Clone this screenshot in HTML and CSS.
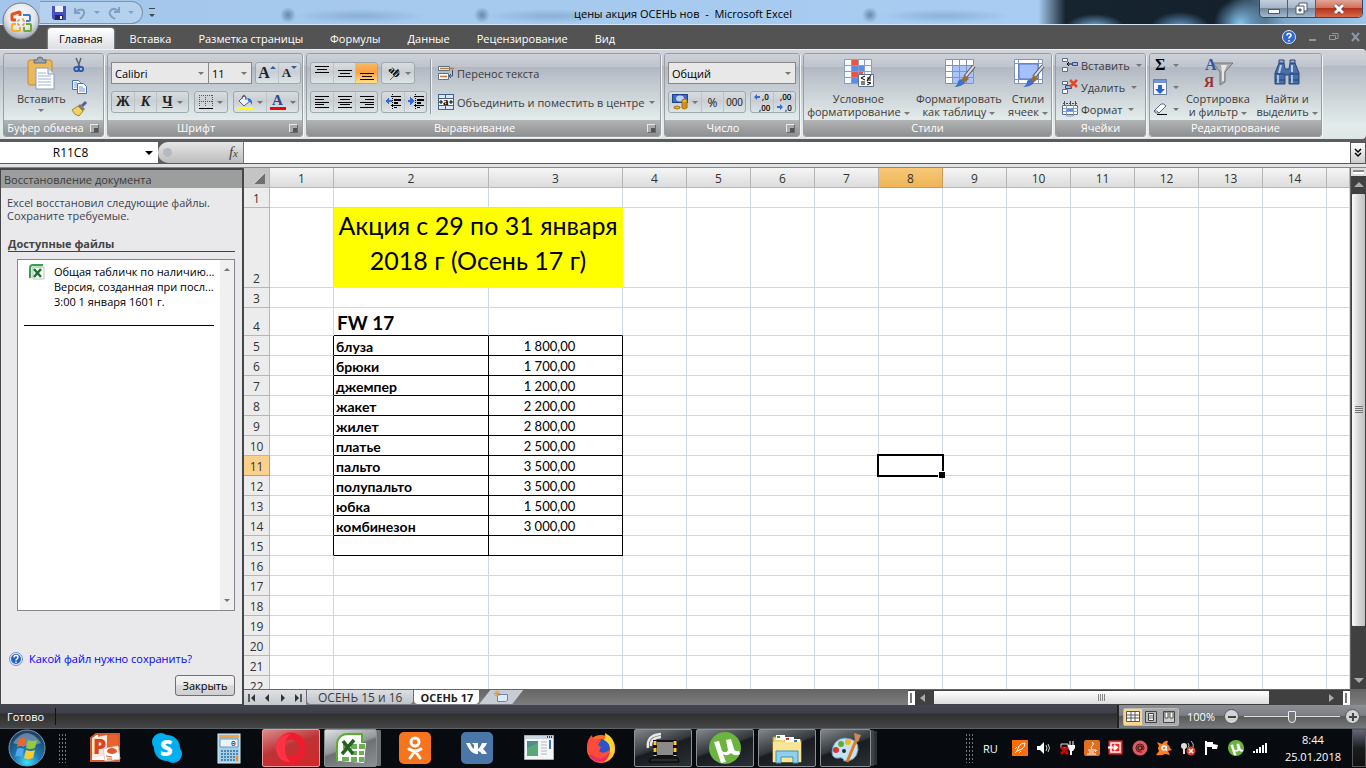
FILE: index.html
```
<!DOCTYPE html>
<html lang="ru">
  <head>
    <meta charset="UTF-8" />
    <meta name="viewport" content="width=device-width, initial-scale=1.0" />
    <title>цены акция ОСЕНЬ нов - Microsoft Excel</title>
    <link rel="stylesheet" href="styles.css">
  </head>
  <body>
    <!-- Window title -->
    <header class="titlebar">
      <button class="orb" aria-label="Office">
        <svg width="38" height="38" viewBox="0 0 38 38">
          <defs>
            <radialGradient id="orbFill" cx="50%" cy="35%" r="65%">
              <stop offset="0" stop-color="#ffffff" />
              <stop offset="0.6" stop-color="#e2e5ea" />
              <stop offset="1" stop-color="#9ba1ac" />
            </radialGradient>
          </defs>
          <circle cx="19" cy="19" r="18" fill="url(#orbFill)" stroke="#6f7682" />
          <g fill="none">
            <path d="M10 17v-4q0-1 1-1l6-2q1 0 1 1v3M10 17q0 1 1 1h3" stroke="#e8501d" stroke-width="3" />
            <path d="M21 13h6q1 0 1 1v4q0 1-1 1h-3" stroke="#3b7fd0" stroke-width="2" />
            <path d="M14 22h-3q-1 0-1 1v5q0 1 1 1h6q1 0 1-1v-3" stroke="#f5b21a" stroke-width="2" />
            <path d="M24 22h4q1 0 1 1v5q0 1-1 1h-5q-1 0-1-1v-3" stroke="#6cab2f" stroke-width="2" />
            <path d="M17 17v2h-2M21 16v3h2M15 22h2v2M23 22h-2v2" stroke="#d97a28" />
          </g>
        </svg>
      </button>
      <div class="quick">
        <button aria-label="Сохранить">
          <svg width="14" height="14" viewBox="0 0 14 14"><path d="M0 0h14v14H2l-2-2z" fill="#4a4fc0" /><path d="M3 0h8v6H3z" fill="#e9efff" /><path d="M3 9h8v5H3z" fill="#23256f" /><path d="M8 10h2v3H8z" fill="#fff" /></svg>
        </button>
        <button aria-label="Отменить">
          <svg width="14" height="14" viewBox="0 0 14 14"><path d="M2 2v5h5M2 7q4-5 8-3 3 3-1 7l-2 2" fill="none" stroke="#7f9fc4" stroke-width="2" /></svg>
        </button>
        <i class="arrow pale"></i>
        <button aria-label="Повторить">
          <svg width="14" height="14" viewBox="0 0 14 14"><path d="M12 1v5H7M12 6Q8 1 4 4q-3 4 1 7l3 2" fill="none" stroke="#7f9fc4" stroke-width="2" /></svg>
        </button>
        <i class="arrow pale"></i>
      </div>
      <button class="quick-more" aria-label="Настройка панели"><i class="arrow dark"></i></button>
      <h1>цены акция ОСЕНЬ нов&nbsp; - &nbsp;Microsoft Excel</h1>
      <div class="window-buttons">
        <button aria-label="Свернуть"><svg width="12" height="12" viewBox="0 0 12 12"><rect x="0.5" y="6.500" width="11" height="4" fill="#fff" stroke="#4c5a6e" /></svg></button>
        <button aria-label="Восстановить"><svg width="13" height="13" viewBox="0 0 13 13"><path d="M4 1h8v8H4z" fill="#fff" stroke="#4c5a6e" /><path d="M1 4h8v8H1z" fill="#fff" stroke="#4c5a6e" /><path d="M4 7h2v2H4z" fill="#7890ab" stroke="#4c5a6e" /></svg></button>
        <button class="close" aria-label="Закрыть окно"><svg width="12" height="12" viewBox="0 0 12 12"><path d="M2 2l8 8M10 2l-8 8" stroke="#5d3434" stroke-width="4" /><path d="M2 2l8 8M10 2l-8 8" stroke="#fff" stroke-width="3" /></svg></button>
      </div>
    </header>

    <!-- Ribbon tabs -->
    <nav class="tabs">
      <button class="active">Главная</button>
      <button>Вставка</button>
      <button>Разметка страницы</button>
      <button>Формулы</button>
      <button>Данные</button>
      <button>Рецензирование</button>
      <button>Вид</button>
      <div class="book-buttons">
        <button aria-label="Справка"><svg width="14" height="14" viewBox="0 0 14 14"><circle cx="7" cy="7" r="6.500" fill="#2f66d8" stroke="#dce8fb" /><path d="M5 5.500q0-2 2-2t2 1.700q0 1-1 1.600-1 .6-1 1.600M7 10v1.500" fill="none" stroke="#fff" stroke-width="1.600" /></svg></button>
        <button aria-label="Свернуть книгу"><svg width="9" height="10" viewBox="0 0 9 10"><path d="M1 8h7" stroke="#8d97a5" stroke-width="2" /></svg></button>
        <button aria-label="Восстановить книгу"><svg width="10" height="10" viewBox="0 0 10 10"><path d="M.5 3.500h6v4h-6zM3 1.500h6v5H7" fill="none" stroke="#8d97a5" /></svg></button>
        <button aria-label="Закрыть книгу"><svg width="9" height="10" viewBox="0 0 9 10"><path d="M1 1l7 8M8 1L1 9" stroke="#8d97a5" stroke-width="2" /></svg></button>
      </div>
    </nav>

    <!-- Ribbon -->
    <div class="ribbon">
      <section class="group clipboard">
        <div class="group-body">
          <button class="big">
            <svg width="32" height="32" viewBox="0 0 32 32"><rect x="3" y="3" width="24" height="25" rx="2" fill="#eab95c" stroke="#c18a33" /><path d="M9 5V3h3q0-3 3-3t3 3h3v3H9z" fill="#9da3ab" stroke="#666c74" /><path d="M11 11h12l6 6v15H11z" fill="#fff" stroke="#8b9cb8" /><path d="M23 11v6h6" fill="#dfe7f3" stroke="#8b9cb8" /><path d="M13 16h8M13 19h13M13 22h13M13 25h13M13 28h13" stroke="#9fb2d4" /></svg>
            <span>Вставить</span>
            <i class="arrow"></i>
          </button>
          <div class="stack">
            <button aria-label="Вырезать"><svg width="16" height="16" viewBox="0 0 16 16"><path d="M5 1l4 9M10 1L7 10" stroke="#5a6478" stroke-width="1.500" /><circle cx="5.500" cy="12" r="2.200" fill="none" stroke="#2a56b4" stroke-width="1.800" /><circle cx="10" cy="12" r="2.200" fill="none" stroke="#2a56b4" stroke-width="1.800" /></svg></button>
            <button aria-label="Копировать"><svg width="16" height="16" viewBox="0 0 16 16"><path d="M1.500 1.500h6l2 2v7h-8z" fill="#fff" stroke="#4b6fb4" /><path d="M6.500 4.500h6l3 3v7h-9z" fill="#fff" stroke="#4b6fb4" /><path d="M3 4h3M3 6h3M3 8h3M8 8h4M8 10h6M8 12h6" stroke="#6f94d6" /></svg></button>
            <button aria-label="Формат по образцу"><svg width="16" height="16" viewBox="0 0 16 16"><path d="M1 9l6-4 5 5-4 5q-5-1-7-6z" fill="#f0d268" stroke="#a88728" /><path d="M7 5l2-2 5 5-2 2z" fill="#8b7b56" /><path d="M11 5l4-4" stroke="#4f5fae" stroke-width="3" /></svg></button>
          </div>
        </div>
        <footer>Буфер обмена <button class="launcher" aria-label="Открыть буфер обмена"></button></footer>
      </section>

      <section class="group font">
        <div class="group-body rows">
          <div class="row">
            <div class="combos">
              <label class="combo family"><select aria-label="Шрифт"><option>Calibri</option></select></label>
              <label class="combo size"><select aria-label="Размер шрифта"><option>11</option></select></label>
            </div>
            <div class="buttons">
              <button class="serif grow" aria-label="Увеличить размер шрифта">A<i class="up"></i></button>
              <button class="serif shrink" aria-label="Уменьшить размер шрифта">A<i class="down"></i></button>
            </div>
          </div>
          <div class="row">
            <div class="buttons">
              <button class="serif">Ж</button>
              <button class="serif italic">К</button>
              <button class="serif wide"><u>Ч</u><i class="arrow"></i></button>
            </div>
            <div class="buttons">
              <button class="wide" aria-label="Границы"><svg width="14" height="14" viewBox="0 0 14 14" shape-rendering="crispEdges"><path d="M.5 0v12M6.500 0v12M13.500 0v12M0 .5h14M0 6.500h14" stroke="#555" stroke-dasharray="1 1" /><path d="M0 13h14" stroke="#000" stroke-width="1" /></svg><i class="arrow"></i></button>
            </div>
            <div class="buttons">
              <button class="wide" aria-label="Цвет заливки"><svg width="16" height="16" viewBox="0 0 16 16"><path d="M2 7l5-5 6 5-6 5z" fill="#eef2f8" stroke="#53607a" /><path d="M5 5q0-4 2-4t2 5" fill="none" stroke="#53607a" /><path d="M11 4q5 1 4 7-1-3-4-4z" fill="#2f6fd0" /><path d="M0 13h16v3H0z" fill="#ff0" /></svg><i class="arrow"></i></button>
              <button class="wide color" aria-label="Цвет текста"><b>A</b><i class="arrow"></i></button>
            </div>
          </div>
        </div>
        <footer>Шрифт <button class="launcher" aria-label="Открыть шрифт"></button></footer>
      </section>

      <section class="group align">
        <div class="group-body">
          <div class="rows">
            <div class="row">
              <div class="buttons">
                <button aria-label="По верхнему краю"><svg width="14" height="16" viewBox="0 0 14 16" shape-rendering="crispEdges"><path d="M0 1.500h14M2 4.500h10M0 7.500h14" stroke="#000" /></svg></button>
                <button aria-label="По середине"><svg width="14" height="16" viewBox="0 0 14 16" shape-rendering="crispEdges"><path d="M0 5.500h14M2 8.500h10M0 11.500h14" stroke="#000" /></svg></button>
                <button class="pressed" aria-label="По нижнему краю"><svg width="14" height="16" viewBox="0 0 14 16" shape-rendering="crispEdges"><path d="M0 8.500h14M2 11.500h10M0 14.500h14" stroke="#000" /></svg></button>
              </div>
              <div class="buttons">
                <button class="wide" aria-label="Ориентация"><svg width="16" height="16" viewBox="0 0 16 16"><path d="M5 15L14 6M14 6v4M14 6h-4" fill="none" stroke="#666" /><text x="1" y="6" transform="rotate(45 3 8)" font-family="Liberation Serif" font-size="11" font-weight="bold">ab</text></svg><i class="arrow"></i></button>
              </div>
            </div>
            <div class="row">
              <div class="buttons">
                <button aria-label="По левому краю"><svg width="14" height="16" viewBox="0 0 14 16" shape-rendering="crispEdges"><path d="M0 2.500h14M0 5.500h9M0 8.500h14M0 10.500h9M0 13.500h14" stroke="#000" /></svg></button>
                <button aria-label="По центру"><svg width="14" height="16" viewBox="0 0 14 16" shape-rendering="crispEdges"><path d="M0 2.500h14M2 5.500h10M0 8.500h14M2 10.500h10M0 13.500h14" stroke="#000" /></svg></button>
                <button aria-label="По правому краю"><svg width="14" height="16" viewBox="0 0 14 16" shape-rendering="crispEdges"><path d="M0 2.500h14M5 5.500h9M0 8.500h14M5 10.500h9M0 13.500h14" stroke="#000" /></svg></button>
              </div>
              <div class="buttons">
                <button aria-label="Уменьшить отступ"><svg width="16" height="16" viewBox="0 0 16 16" shape-rendering="crispEdges"><path d="M7.500 0v16" stroke="#000" stroke-dasharray="1 1" /><path d="M6 2.500h10M6 11.500h10M9 13.500h3" stroke="#000" /><path d="M9 5h7v2H9zM9 8h4v2H9z" /><path d="M0 7l4-4v3h3v2H4v3z" fill="#2c6be0" /></svg></button>
                <button aria-label="Увеличить отступ"><svg width="16" height="16" viewBox="0 0 16 16" shape-rendering="crispEdges"><path d="M7.500 0v16" stroke="#000" stroke-dasharray="1 1" /><path d="M6 2.500h10M6 11.500h10M9 13.500h3" stroke="#000" /><path d="M9 5h7v2H9zM9 8h4v2H9z" /><path d="M6 7L2 3v3H0v2h2v3z" fill="#2c6be0" /></svg></button>
              </div>
            </div>
          </div>
          <div class="divider"></div>
          <div class="rows">
            <button class="line"><svg width="16" height="16" viewBox="0 0 16 16"><path d="M.5 1.500h11v4H.5zM.5 8.500h10v6H.5z" fill="#fff" stroke="#5f7089" /><path d="M2 3.500h14M2 11.500h7" stroke="#b57b3f" stroke-width="1.500" /><path d="M14.500 5v6h-3M13 9l-2 2 2 2" fill="none" stroke="#3c4f74" /></svg>Перенос текста</button>
            <button class="line"><svg width="16" height="16" viewBox="0 0 16 16"><rect width="16" height="16" fill="#44608f" /><path d="M1 1h6v3H1zM8 1h7v3H8zM1 12h6v3H1zM8 12h7v3H8z" fill="#dbe6f6" /><path d="M1 5h14v6H1z" fill="#fff" /><path d="M1 8h4M11 8h4M3 6v4M13 6v4" stroke="#000" /><text x="5" y="11" font-family="Liberation Serif" font-size="11" font-weight="bold">a</text></svg>Объединить и поместить в центре<i class="arrow"></i></button>
          </div>
        </div>
        <footer>Выравнивание <button class="launcher" aria-label="Открыть выравнивание"></button></footer>
      </section>

      <section class="group number">
        <div class="group-body rows">
          <label class="combo"><select aria-label="Числовой формат"><option>Общий</option></select></label>
          <div class="row">
            <div class="buttons">
              <button class="wide" aria-label="Денежный формат"><svg width="16" height="16" viewBox="0 0 16 16"><rect x="0.500" y="0.500" width="15" height="8" fill="#3b6cc4" stroke="#20458e" /><ellipse cx="8" cy="4.500" rx="4" ry="3" fill="#bcd2f3" /><path d="M10 6q3-2 5 0v8q-3 2-5 0zM2 13q3-2 6 0v1q-3 2-6 0z" fill="#f2b62c" stroke="#a7700c" /><path d="M10 9h5M10 11h5M10 13h5" stroke="#a7700c" /></svg><i class="arrow"></i></button>
              <button class="percent">%</button>
              <button class="thousands">000</button>
            </div>
            <div class="buttons">
              <button aria-label="Увеличить разрядность"><svg width="18" height="20" viewBox="0 0 18 20"><path d="M1 5l3-3v2h3v2H4v2z" fill="#2c6be0" /><text x="9" y="8" font-family="Open Sans" font-size="8" font-weight="600">,0</text><text x="6" y="19" font-family="Open Sans" font-size="8" font-weight="600">,00</text></svg></button>
              <button aria-label="Уменьшить разрядность"><svg width="18" height="20" viewBox="0 0 18 20"><path d="M7 15l-3-3v2H1v2h3v2z" fill="#2c6be0" /><text x="4" y="8" font-family="Open Sans" font-size="8" font-weight="600">,00</text><text x="9" y="19" font-family="Open Sans" font-size="8" font-weight="600">,0</text></svg></button>
            </div>
          </div>
        </div>
        <footer>Число <button class="launcher" aria-label="Открыть число"></button></footer>
      </section>

      <section class="group styles">
        <div class="group-body">
          <button class="big">
            <svg width="32" height="32" viewBox="0 0 32 32"><path d="M2.500 2.500h27v24h-27z" fill="#f4f8ff" /><path d="M9 2h7v6H9zM9 14h12v6H9z" fill="#f0533a" /><path d="M9 8h13v6H9zM9 20h7v6H9z" fill="#5b8de8" /><path d="M2.500 2.500h27v24h-27zM9.500 2v25M16.500 2v25M22.500 2v25M2 8.500h28M2 14.500h28M2 20.500h28" fill="none" stroke="#8a9dc0" /><path d="M16.500 17.500h15v12h-15z" fill="#fff" stroke="#5d7396" /><path d="M23 19l-4 2 4 2M19 25h4M19 27h4M25 21h4M25 23h4M29 18l-4 6M25 25l4 1-4 2" fill="none" stroke="#000" /></svg>
            <span>Условное<br>форматирование<i class="arrow"></i></span>
          </button>
          <button class="big">
            <svg width="32" height="32" viewBox="0 0 32 32"><path d="M2.500 2.500h28v24h-28z" fill="#fff" /><path d="M9 8h21v18H9z" fill="#a9c4fb" /><path d="M2.500 2.500h28v24h-28zM9.500 2v25M16.500 2v25M23.500 2v25M2 8.500h28M2 14.500h28M2 20.500h28" fill="none" stroke="#7f95bd" /><path d="M31 9l-9 11" stroke="#555" stroke-width="4" /><path d="M31 9l-9 11" stroke="#d8dadd" stroke-width="2" /><path d="M22 18l4 4-5 4-3-3z" fill="#9a6a3b" /><path d="M18 22l4 4q-4 4-11 4 4-2 4-6z" fill="#3f72c6" /></svg>
            <span>Форматировать<br>как таблицу<i class="arrow"></i></span>
          </button>
          <button class="big">
            <svg width="32" height="32" viewBox="0 0 32 32"><path d="M2.500 2.500h28v24h-28z" fill="#fff" stroke="#7f95bd" /><path d="M6.500 2v25M26.500 2v25M2 6.500h28M2 22.500h28" stroke="#7f95bd" /><path d="M7 7h19v15H7z" fill="#a5c0fa" stroke="#5279c4" /><path d="M31 9l-9 11" stroke="#555" stroke-width="4" /><path d="M31 9l-9 11" stroke="#d8dadd" stroke-width="2" /><path d="M22 18l4 4-5 4-3-3z" fill="#9a6a3b" /><path d="M18 22l4 4q-4 4-11 4 4-2 4-6z" fill="#3f72c6" /></svg>
            <span>Стили<br>ячеек<i class="arrow"></i></span>
          </button>
        </div>
        <footer>Стили</footer>
      </section>

      <section class="group cells">
        <div class="group-body stack">
          <button class="line"><svg width="16" height="16" viewBox="0 0 16 16"><path d="M.5 1.500h5v3h-5zM.5 10.500h5v4h-5z" fill="#fff" stroke="#5a6f96" /><path d="M10.500 5.500h5v3h-5z" fill="#9dbcf0" stroke="#2e4d86" /><path d="M10 7H5M7 5L5 7l2 2" stroke="#000" fill="none" /></svg>Вставить<i class="arrow"></i></button>
          <button class="line"><svg width="16" height="16" viewBox="0 0 16 16"><path d="M.5 2.500h5v3h-5zM.5 10.500h5v4h-5z" fill="#fff" stroke="#5a6f96" /><path d="M3.500 6.500h6v3h-6z" fill="#9dbcf0" stroke="#2e4d86" /><path d="M8 1l7 7M15 1L8 8" stroke="#ee4422" stroke-width="2.500" /></svg>Удалить<i class="arrow"></i></button>
          <button class="line"><svg width="16" height="16" viewBox="0 0 16 16"><path d="M.5 4.500h15v9H.5z" fill="#fff" stroke="#5a6f96" /><path d="M5 7h6v4H5z" fill="#5b8de8" /><path d="M4.500 4v11h7V4M1 7.500h15M1 10.500h15" fill="none" stroke="#8b9fc2" /><path d="M1 2.500h14M2.500 0v4M8.500 0v4M13.500 0v4" stroke="#3d4b66" stroke-dasharray="2 1" /></svg>Формат<i class="arrow"></i></button>
        </div>
        <footer>Ячейки</footer>
      </section>

      <section class="group editing">
        <div class="group-body">
          <div class="stack">
            <button class="sigma"><b>Σ</b><i class="arrow"></i></button>
            <button aria-label="Заполнить"><svg width="14" height="16" viewBox="0 0 14 16"><rect x="0.500" y="0.500" width="13" height="15" fill="#f3f7ff" stroke="#6b7f9f" /><path d="M1 1h12v3H1z" fill="#7196d8" /><path d="M5 6h4v4h3l-5 5-5-5h3z" fill="#2b63d0" /></svg><i class="arrow"></i></button>
            <button aria-label="Очистить"><svg width="14" height="16" viewBox="0 0 14 16"><path d="M1 10l7-7q3-1 5 2l-7 7q-4 1-5-2z" fill="#fff" stroke="#56678c" /><path d="M1 10q3-1 5 2" fill="none" stroke="#56678c" /><path d="M4 13.500h10" stroke="#000" /></svg><i class="arrow"></i></button>
          </div>
          <button class="big">
            <svg width="32" height="32" viewBox="0 0 32 32"><path d="M11 6h20l-8 9v10l-5 3V15z" fill="#a9abad" stroke="#75787b" /><path d="M19 8h6l-3 7v9h-2v-9z" fill="#e6e7e8" /><text x="3" y="13" font-family="Liberation Serif" font-size="16" font-weight="bold" fill="#2c55b0">А</text><text x="2" y="30" font-family="Liberation Serif" font-size="14" font-weight="bold" fill="#9c2f2f">Я</text></svg>
            <span>Сортировка<br>и фильтр<i class="arrow"></i></span>
          </button>
          <button class="big">
            <svg width="32" height="32" viewBox="0 0 32 32"><path d="M8 6h5l1 6h4l1-6h5l4 10v11H18v-9h-4v9H4V16z" fill="#496ea9" stroke="#2a4677" /><path d="M8 3h5v3H8zM19 3h5v3h-5z" fill="#8fadd9" stroke="#2a4677" /><path d="M10 8L8 16M21 8v7" stroke="#b8cdec" stroke-width="2" /><path d="M4 17h10M18 17h10M4 23h10M18 23h10" stroke="#253f6e" /><path d="M7 18v8M21 18v8" stroke="#a7c0e6" stroke-width="2" /></svg>
            <span>Найти и<br>выделить<i class="arrow"></i></span>
          </button>
        </div>
        <footer>Редактирование</footer>
      </section>
    </div>

    <!-- Formula bar -->
    <div class="formula">
      <div class="name-box">
        <input type="text" value="R11C8" aria-label="Имя ячейки" />
        <i class="arrow black"></i>
      </div>
      <div class="fx"><span class="dot"></span><button aria-label="Вставить функцию"><i>f<small>x</small></i></button></div>
      <input class="formula-text" type="text" aria-label="Строка формул" />
      <button class="expand" aria-label="Развернуть"><svg width="8" height="10" viewBox="0 0 8 10"><path d="M1 1l3 3 3-3M1 5l3 3 3-3" fill="none" stroke="#000" stroke-width="1.500" /></svg></button>
    </div>

    <main>
      <aside class="recovery">
        <h2>Восстановление документа</h2>
        <p>Excel восстановил следующие файлы. Сохраните требуемые.</p>
        <h3>Доступные файлы</h3>
        <div class="files">
          <ul>
            <li>
              <svg width="16" height="16" viewBox="0 0 16 16"><path d="M4 3h11v12H4z" fill="#fff" stroke="#b9c4ba" /><path d="M1 14V4q0-3 3-3h10" fill="none" stroke="#37a04b" stroke-width="2" /><path d="M3 14V5q0-2 2-2h8" fill="none" stroke="#a6d8a9" /><path d="M5 5l7 8M12 5l-7 8" stroke="#1d7330" stroke-width="2.500" /></svg>
              <div>
                <span>Общая табличк по наличию...</span>
                <span>Версия, созданная при посл...</span>
                <span>3:00 1 января 1601 г.</span>
              </div>
            </li>
          </ul>
          <div class="files-scroll"><i class="up"></i><i class="down"></i></div>
        </div>
        <a class="help" href="#"><svg width="14" height="14" viewBox="0 0 14 14"><circle cx="7" cy="7" r="6.500" fill="#e3edfb" stroke="#6f94c8" /><circle cx="7" cy="7" r="5" fill="#2660c2" /><path d="M5 5.500q0-2 2-2t2 1.700q0 1-1 1.600-1 .6-1 1.600M7 9.500V11" fill="none" stroke="#fff" stroke-width="1.400" /></svg>Какой файл нужно сохранить?</a>
        <button class="close-pane">Закрыть</button>
      </aside>

      <section class="book">
        <div class="view">
          <div class="sheet">
            <table id="sheet">
              <colgroup>
                <col class="c-head"><col class="c-std"><col class="c-name"><col class="c-price">
                <col class="c-std"><col class="c-std"><col class="c-std"><col class="c-std"><col class="c-std"><col class="c-std">
                <col class="c-std"><col class="c-std"><col class="c-std"><col class="c-std"><col class="c-std"><col>
              </colgroup>
              <thead>
                <tr>
                  <th class="corner"></th><th>1</th><th>2</th><th>3</th><th>4</th><th>5</th><th>6</th><th>7</th>
                  <th class="current">8</th><th>9</th><th>10</th><th>11</th><th>12</th><th>13</th><th>14</th><th></th>
                </tr>
              </thead>
              <tbody>
                <tr><th>1</th><td></td><td></td><td></td></tr>
                <tr class="promo"><th>2</th><td></td><td colspan="2">Акция с 29 по 31 января 2018 г (Осень 17 г)</td></tr>
                <tr><th>3</th><td></td><td></td><td></td></tr>
                <tr class="season"><th>4</th><td></td><td>FW 17</td><td></td></tr>
                <tr class="price"><th>5</th><td></td><td>блуза</td><td>1 800,00</td></tr>
                <tr class="price"><th>6</th><td></td><td>брюки</td><td>1 700,00</td></tr>
                <tr class="price"><th>7</th><td></td><td>джемпер</td><td>1 200,00</td></tr>
                <tr class="price"><th>8</th><td></td><td>жакет</td><td>2 200,00</td></tr>
                <tr class="price"><th>9</th><td></td><td>жилет</td><td>2 800,00</td></tr>
                <tr class="price"><th>10</th><td></td><td>платье</td><td>2 500,00</td></tr>
                <tr class="price"><th class="current">11</th><td></td><td>пальто</td><td>3 500,00</td></tr>
                <tr class="price"><th>12</th><td></td><td>полупальто</td><td>3 500,00</td></tr>
                <tr class="price"><th>13</th><td></td><td>юбка</td><td>1 500,00</td></tr>
                <tr class="price"><th>14</th><td></td><td>комбинезон</td><td>3 000,00</td></tr>
                <tr class="price"><th>15</th><td></td><td></td><td></td></tr>
              </tbody>
            </table>
          </div>
          <div class="vscroll">
            <span class="split"></span>
            <i class="up"></i>
            <span class="thumb"></span>
            <i class="down"></i>
          </div>
        </div>
        <div class="sheet-bar">
          <div class="sheet-nav">
            <button aria-label="Первый лист"><svg width="8" height="8" viewBox="0 0 8 8"><path d="M1 0v8" stroke="#333" stroke-width="1.500" /><path d="M7 0v8L3 4z" fill="#333" /></svg></button>
            <button aria-label="Предыдущий лист"><svg width="8" height="8" viewBox="0 0 8 8"><path d="M6 0v8L2 4z" fill="#333" /></svg></button>
            <button aria-label="Следующий лист"><svg width="8" height="8" viewBox="0 0 8 8"><path d="M2 0v8l4-4z" fill="#333" /></svg></button>
            <button aria-label="Последний лист"><svg width="8" height="8" viewBox="0 0 8 8"><path d="M1 0v8l4-4z" fill="#333" /><path d="M7 0v8" stroke="#333" stroke-width="1.500" /></svg></button>
          </div>
          <button class="sheet-tab">ОСЕНЬ 15 и 16</button>
          <button class="sheet-tab active">ОСЕНЬ 17</button>
          <button class="sheet-new" aria-label="Вставить лист"><svg width="16" height="13" viewBox="0 0 16 13"><path d="M4.500 4.500h10v6l-2 1h-8z" fill="#dfe9fa" stroke="#6b83b4" /><path d="M4 0v7M.5 3.500h7M1.500 1l5 5M6.500 1l-5 5" stroke="#e79a2b" /></svg></button>
          <div class="hscroll">
            <span class="handle"></span>
            <i class="left"></i>
            <span class="thumb"></span>
            <i class="right"></i>
            <span class="handle"></span>
          </div>
        </div>
      </section>
    </main>

    <!-- Status bar -->
    <div class="status">
      <span class="ready">Готово</span>
      <div class="zoom">
        <div class="views">
          <button class="on" aria-label="Обычный"><svg width="14" height="12" viewBox="0 0 14 12"><path d="M.5.500h13v10H.5zM5 0v11M9 0v11M0 4h14M0 7h14" fill="#fff" stroke="#555" /></svg></button>
          <button aria-label="Разметка страницы"><svg width="12" height="12" viewBox="0 0 12 12"><path d="M.5.500h11v11H.5z" fill="#bbb" stroke="#444" /><path d="M3.500 2.500h5v7h-5z" fill="#fff" stroke="#444" /><path d="M4 5h4M4 7h4" stroke="#666" /></svg></button>
          <button aria-label="Страничный"><svg width="12" height="12" viewBox="0 0 12 12"><path d="M.5.500h11v11H.5z" fill="#ccc" stroke="#444" /><path d="M2 1h3v6H2zM7 1h3v6H7z" fill="#fff" stroke="#555" /></svg></button>
        </div>
        <span>100%</span>
        <button class="round" aria-label="Уменьшить"><svg width="8" height="8" viewBox="0 0 8 8"><path d="M0 4h8" stroke="#444" stroke-width="2" /></svg></button>
        <input type="range" min="10" max="190" value="100" aria-label="Масштаб" />
        <button class="round" aria-label="Увеличить"><svg width="8" height="8" viewBox="0 0 8 8"><path d="M0 4h8M4 0v8" stroke="#444" stroke-width="2" /></svg></button>
      </div>
    </div>

    <!-- Windows taskbar -->
    <footer class="taskbar">
      <button class="start" aria-label="Пуск">
        <svg width="38" height="38" viewBox="0 0 38 38">
          <defs>
            <radialGradient id="startFill" cx="50%" cy="90%" r="80%">
              <stop offset="0" stop-color="#3fe0ff" />
              <stop offset="0.450" stop-color="#1f78b4" />
              <stop offset="1" stop-color="#1c4266" />
            </radialGradient>
          </defs>
          <circle cx="19" cy="19" r="18" fill="url(#startFill)" stroke="#7d97ad" />
          <path d="M5 14Q19-6 33 14 19 20 5 14z" fill="#b7cde0" opacity="0.450" />
          <path d="M11 10q4-2 7 0l-2 8q-3-2-7 0z" fill="#f0642a" />
          <path d="M20 11q4 2 9 0l-2 8q-5 2-9 0z" fill="#94c83d" />
          <path d="M9 20q3-2 7 0l-2 8q-4-2-7 0z" fill="#4fa8ea" />
          <path d="M18 21q4 2 9 0l-2 8q-5 2-9 0z" fill="#fccb2f" />
        </svg>
      </button>
      <span class="grip"></span>
      <div class="apps">
        <button aria-label="PowerPoint"><svg width="32" height="32" viewBox="0 0 32 32"><path d="M7 2h23v27H2V6z" fill="#fff" stroke="#d9592b" stroke-width="2" /><path d="M9 3h20v13H9z" fill="#e8622e" /><path d="M3 6l15-3v20L3 26z" fill="#fbe6da" /><text x="4" y="22" font-family="Open Sans" font-size="21" font-weight="800" fill="#d9451b">P</text><path d="M14 17l15-3 2 13-15 2z" fill="#fff" stroke="#f0c4b2" /><ellipse cx="23" cy="19" rx="5" ry="3" fill="#dc5a30" /><path d="M17 24l6 1M18 27h5" stroke="#dc5a30" /></svg></button>
        <button aria-label="Skype"><svg width="32" height="32" viewBox="0 0 32 32"><circle cx="16" cy="16" r="13" fill="#00aff0" /><circle cx="10" cy="10" r="9" fill="#00aff0" /><circle cx="22" cy="22" r="9" fill="#00aff0" /><text x="9" y="24" font-family="Open Sans" font-size="22" font-weight="800" fill="#fff">S</text></svg></button>
        <button aria-label="Калькулятор"><svg width="32" height="32" viewBox="0 0 32 32"><rect x="5" y="2" width="22" height="29" fill="#a5cfea" stroke="#e0f0fa" /><path d="M6 3h20v3H6z" fill="#f2a241" /><path d="M7 7h18v8H7z" fill="#e9f3fa" stroke="#6c9abb" /><text x="18" y="14" font-family="Liberation Mono" font-size="8">0</text><path d="M8 19h17M8 22h17M8 25h17M8 28h17" stroke="#4f86b0" stroke-width="2" stroke-dasharray="2 1" /><path d="M23 24h2v5h-2z" fill="#ef8e2c" /></svg></button>
        <button class="opera" aria-label="Opera"><svg width="32" height="32" viewBox="0 0 32 32"><ellipse cx="16" cy="16" rx="11.500" ry="12" fill="none" stroke="#ed1c2e" stroke-width="7" /><path d="M16 2q-6 3-6 14t6 14q-14 0-15-14Q2 2 16 2z" fill="#ff3345" /></svg></button>
        <button class="running current" aria-label="Excel"><svg width="32" height="32" viewBox="0 0 32 32"><path d="M2 30V11Q4 2 13 2h14v16" fill="#fff" stroke="#58ae2e" stroke-width="2" /><path d="M7 11h24l-2 20-24-2z" fill="#fff" /><path d="M8 12h6v5H8zM16 12h6v5h-6zM24 12h6v5h-6zM16 19h6v4h-6zM24 19h5v4h-5zM7 25h7v4H7zM16 25h6v5h-6zM24 25h5v5h-5z" fill="#6fae54" /><path d="M8 9l10 13M19 8L7 22" stroke="#23641f" stroke-width="3.500" /></svg></button>
        <button aria-label="Одноклассники"><svg width="32" height="32" viewBox="0 0 32 32"><rect width="32" height="32" rx="5" fill="#f7731c" /><circle cx="16" cy="10" r="4" fill="none" stroke="#fff" stroke-width="3" /><path d="M10 17q6 4 12 0M16 19l-5 7M16 19l5 7" fill="none" stroke="#fff" stroke-width="3" stroke-linecap="round" /></svg></button>
        <button aria-label="ВКонтакте"><svg width="32" height="32" viewBox="0 0 32 32"><rect width="32" height="32" rx="5" fill="#4a76a8" /><path d="M5 11h4q2 5 4 6v-4l-2-2h6v6q2-1 4-6h5q-1 3-4 6 3 2 4 5h-5q-2-3-4-3v3h-2Q9 21 5 11z" fill="#fff" /></svg></button>
        <button aria-label="Окно"><svg width="32" height="32" viewBox="0 0 32 32"><path d="M1.500 3.500h29v24h-29z" fill="#f4f6f8" stroke="#a6afba" /><path d="M2 4h28v3H2z" fill="#ccd6e2" /><path d="M24 5h1M26 5h1M28 5h1" stroke="#345" stroke-width="2" /><path d="M4 9h11v15H4z" fill="#508c8b" /><path d="M4 16l11-5v13H4z" fill="#5ba877" /><path d="M18 10h6M18 13h6M18 16h6M18 19h6M18 22h6" stroke="#b5bac0" /><path d="M26 8h2v9h-2z" fill="#3f78ad" /></svg></button>
        <button aria-label="Firefox"><svg width="32" height="32" viewBox="0 0 32 32"><circle cx="16" cy="17" r="14" fill="#ff6a2b" /><circle cx="16" cy="16" r="9" fill="#2855c8" /><path d="M2 15Q2 7 7 3q0 4 4 4l5 1-3 5 3 2-2 4q4 4 10-1 2 8-8 9-12 0-14-12z" fill="#ff4a3c" /><path d="M20 1q10 5 10 15 0 11-11 14 7-5 6-13 0-6-6-9 2-3 1-7z" fill="#ffd22e" /><path d="M9 24q8 6 15-3-1 9-10 9-7-1-11-8z" fill="#ee2b63" /></svg></button>
        <button class="running" aria-label="Подключение"><svg width="32" height="32" viewBox="0 0 32 32"><path d="M1 16Q-1 3 14 2M4 14Q3 6 14 5" fill="none" stroke="#e7e7e7" stroke-width="2.500" /><path d="M6 8h24v17H6z" fill="#111" /><path d="M8 9v15M28 9v15" stroke="#ffc928" stroke-width="3" stroke-dasharray="4 3" /><path d="M10 10h16v13H10z" fill="#8b8b8b" /><path d="M4 26h27l1 4H2z" fill="#2b2b2b" stroke="#000" /></svg></button>
        <button class="running" aria-label="uTorrent"><svg width="32" height="32" viewBox="0 0 32 32"><circle cx="16" cy="16" r="16" fill="#6cb33f" /><path d="M5 10l5-1 3 10q4 3 6-1l-2-10 5-1 3 10q1 3 5 2l1 3q-5 3-9-1-4 4-8 1l3 8-5 1z" fill="#fff" /></svg></button>
        <button class="running" aria-label="Проводник"><svg width="32" height="32" viewBox="0 0 32 32"><path d="M2 5h9l2 3h17v22H2z" fill="#f2d573" stroke="#b28f36" /><path d="M5 3h9v5H5zM14 5h9v5h-9zM21 7h8v5h-8z" fill="#fff" /><path d="M6 5h3" stroke="#2c9c3a" stroke-width="2" /><path d="M15 7h3" stroke="#d33" stroke-width="2" /><path d="M23 9h3" stroke="#2a7bd8" stroke-width="2" /><path d="M2 10h28v20H2z" fill="#f8e596" /><path d="M5 31V19h22v12h-5v-6H10v6z" fill="#8ed0ee" stroke="#3f93bd" /></svg></button>
        <button class="running" aria-label="Paint"><svg width="32" height="32" viewBox="0 0 32 32"><path d="M15 6q14 1 13 12-2 12-14 11-1-4-5-3-7 1-7-6Q3 7 15 6z" fill="#c5e1f3" stroke="#6b9fc4" /><circle cx="6" cy="18" r="3" fill="#d9362b" /><circle cx="11" cy="12" r="3" fill="#5cab3c" /><circle cx="18" cy="10" r="3" fill="#f1b71e" /><circle cx="14" cy="19" r="2" fill="#14314a" /><path d="M27 6L17 30" stroke="#e07a1f" stroke-width="3" /><path d="M25 8l-1-7 7 2-3 7z" fill="#c58a58" /></svg></button>
      </div>
      <span class="grip"></span>
      <span class="lang">RU</span>
      <div class="tray">
        <svg width="16" height="16" viewBox="0 0 16 16"><rect width="16" height="16" fill="#ff6d0a" /><path d="M5 11l2-5q2-3 6-3 0 4-3 6l-5 2zM3 9l2-2M7 13l2-2M3 13l2-2" fill="none" stroke="#fff" /></svg>
        <svg width="16" height="16" viewBox="0 0 16 16"><path d="M1 6h3l4-4v12l-4-4H1z" fill="#fff" /><path d="M10 5q2 3 0 6M12 4q3 4 0 8" fill="none" stroke="#ccc" /></svg>
        <svg width="16" height="16" viewBox="0 0 16 16"><path d="M1 4h7v4H1z" fill="#111" stroke="#ddd" /><path d="M10 1v4M13 1v4" stroke="#fff" /><path d="M8 5h7v3l-2 3h-1v4h-2v-4L8 8z" fill="#fff" /><path d="M1 7l7 7M8 7l-7 7" stroke="#e10000" stroke-width="2.500" /></svg>
        <svg width="16" height="16" viewBox="0 0 16 16"><rect width="16" height="16" rx="2" fill="#e06e1f" /><path d="M8 2q3 2 0 4-2 2 0 3M4 10h7M5 12h5M3 14h9M11 10q3 0 0 2" fill="none" stroke="#fff" /></svg>
        <svg width="16" height="16" viewBox="0 0 16 16"><rect x="1" y="1" width="13" height="13" fill="#f22" stroke="#f22" /><path d="M3 3h9v9H3z" fill="none" stroke="#fff" stroke-width="1.500" /><path d="M0 7.500h9M6 5l3 2.500L6 10" fill="none" stroke="#fff" stroke-width="2" /></svg>
        <svg width="16" height="16" viewBox="0 0 16 16"><circle cx="8" cy="8" r="7.500" fill="#e0595d" /><circle cx="8" cy="8" r="2" fill="none" stroke="#501d1f" stroke-width="1.500" /><path d="M10 6v3q2 2 2-1 0-4-4-4T4 8t4 4h2" fill="none" stroke="#501d1f" /></svg>
        <svg width="16" height="16" viewBox="0 0 16 16"><path d="M1 2l5 2q3-4 6-3l-1 3q3 2 3 4l2 2-4 1 2 4-5-1q-4 2-9 1l3-4q-2-3 0-5z" fill="#ff7d1c" /><circle cx="8" cy="8" r="2" fill="none" stroke="#fff" stroke-width="1.500" /><path d="M10.500 6v5" stroke="#fff" /></svg>
        <svg width="16" height="16" viewBox="0 0 16 16"><circle cx="4" cy="6" r="3" fill="#ddd" /><path d="M4 7v7" stroke="#ddd" stroke-width="2" /><path d="M8 3q2 2 0 5M11 1q4 4 1 8" fill="none" stroke="#bbb" /><circle cx="11" cy="11" r="4.500" fill="#d8402c" /><path d="M9 9l4 4M13 9l-4 4" stroke="#fff" stroke-width="1.500" /></svg>
        <svg width="16" height="16" viewBox="0 0 16 16"><path d="M2 1v14" stroke="#fff" stroke-width="2" /><path d="M3 2h6v2l5 1-1 4H8V7H3z" fill="#fff" /></svg>
        <svg width="16" height="16" viewBox="0 0 32 32"><circle cx="16" cy="16" r="16" fill="#6cb33f" /><path d="M5 10l5-1 3 10q4 3 6-1l-2-10 5-1 3 10q1 3 5 2l1 3q-5 3-9-1-4 4-8 1l3 8-5 1z" fill="#fff" /></svg>
        <svg width="16" height="16" viewBox="0 0 16 16"><path d="M2 11v2M5 9v4M8 7v6M11 5v8M14 3v10" stroke="#fff" stroke-width="2" /></svg>
      </div>
      <div class="clock"><span>8:44</span><span>25.01.2018</span></div>
      <button class="desktop" aria-label="Свернуть все окна"></button>
    </footer>
    <script src="script.js"></script>
  </body>
</html>
```
FILE: styles.css
```
* {
  box-sizing: border-box;
}
body {
  margin: 0;
  height: 100vh;
  display: flex;
  flex-direction: column;
  overflow: hidden;
  background: #535353;
  color: #3b3b3b;
  font-family: "Open Sans", "Noto Sans", sans-serif;
  font-size: 11px;
}
button,
input,
select {
  margin: 0;
  padding: 0;
  border: 0;
  background: none;
  color: inherit;
  font: inherit;
  border-radius: 0;
}
svg {
  display: block;
  flex: none;
  overflow: visible;
}

/* little triangles */
.arrow,
.up,
.down,
.left,
.right {
  display: inline-block;
  flex: none;
  width: 0;
  height: 0;
  border: 3px solid transparent;
}
.arrow,
.down {
  border-top: 3px solid #777;
  border-bottom: 0;
}
.up {
  border-bottom: 3px solid #777;
  border-top: 0;
}
.left {
  border-right: 5px solid #aaa;
  border-left: 0;
}
.right {
  border-left: 5px solid #aaa;
  border-right: 0;
}
.arrow.pale {
  border-top-color: #7f9fc4;
}
.arrow.dark {
  border-top-color: #444;
}
.arrow.black {
  border-width: 4px 4px 0;
  border-top-color: #000;
}

/* title */
.titlebar {
  position: relative;
  flex: none;
  height: 25px;
  display: flex;
  align-items: center;
  justify-content: center;
  background:
    radial-gradient(ellipse 8px 8px at 482px 15px, rgba(60, 90, 125, 0.6), transparent),
    radial-gradient(ellipse 8px 8px at 870px 15px, rgba(60, 90, 125, 0.6), transparent),
    radial-gradient(ellipse 8px 8px at 288px 15px, rgba(60, 90, 125, 0.6), transparent),
    radial-gradient(ellipse 65px 7px at 360px 16px, rgba(110, 150, 190, 0.5), transparent),
    radial-gradient(ellipse 65px 7px at 550px 16px, rgba(110, 150, 190, 0.5), transparent),
    radial-gradient(ellipse 65px 7px at 945px 16px, rgba(110, 150, 190, 0.5), transparent),
    radial-gradient(ellipse 30px 14px at 1095px 28px, #7fb6e8, transparent),
    radial-gradient(ellipse 30px 16px at 1180px 28px, #6da4d8, transparent),
    radial-gradient(ellipse 26px 26px at 1240px 24px, #86c6f2, transparent),
    linear-gradient(90deg, #a3c6ea 0, #a9cdf2 76%, #16242f 78%, #14212c 90%, #7ba7cd 94%, #9cc6ec 100%);
  border-bottom: 1px solid #d6e8f8;
}
.titlebar h1 {
  margin: 0;
  color: #000;
  font-size: 11px;
  font-weight: normal;
  padding: 3px 4px 0;
}
.orb {
  position: absolute;
  left: 2px;
  top: 2px;
  z-index: 2;
}
.quick {
  position: absolute;
  left: 40px;
  top: 1px;
  height: 23px;
  display: flex;
  align-items: center;
  gap: 7px;
  padding: 0 8px 0 12px;
  border: 1px solid #7d94ad;
  border-left: 0;
  border-radius: 0 12px 12px 0;
  background: rgba(200, 220, 242, 0.5);
}
.quick-more {
  position: absolute;
  left: 149px;
  top: 8px;
  border-top: 1px solid #444;
  padding-top: 2px;
  line-height: 3px;
}
.window-buttons {
  position: absolute;
  right: 3px;
  top: 0;
  display: flex;
  height: 18px;
  border: 1px solid #35465a;
  border-top: 0;
  border-radius: 0 0 5px 5px;
  overflow: hidden;
}
.window-buttons button {
  width: 28px;
  display: flex;
  justify-content: center;
  align-items: center;
  border-right: 1px solid #4c5f75;
  background: linear-gradient(#c3cfdc, #a3b3c4 50%, #76899e 50%, #a4b8cc);
}
.window-buttons .close {
  width: 46px;
  border-right: 0;
  background: linear-gradient(#e0a596, #cf6b55 50%, #b5321a 50%, #d5694c);
}

/* ribbon tabs */
.tabs {
  flex: none;
  height: 24px;
  display: flex;
  align-items: flex-end;
  padding-left: 48px;
  background: #535353;
}
.tabs > button {
  height: 21px;
  padding: 0 11px;
  margin-right: 5px;
  color: #fff;
}
.tabs > .active {
  color: #000;
  background: linear-gradient(#fff, #dcdfe3);
  border-radius: 3px 3px 0 0;
  box-shadow: 0 0 2px #bfe6ee;
}
.book-buttons {
  margin-left: auto;
  display: flex;
  align-items: center;
  gap: 12px;
  height: 24px;
  padding-right: 6px;
}

/* ribbon */
.ribbon {
  flex: none;
  display: flex;
  gap: 3px;
  padding: 3px 3px 2px;
  border-top: 1px solid #eef0f2;
  border-radius: 0 4px 4px 0;
  background: linear-gradient(#d0d4da, #c3c8d0 17%, #b4bac4 18%, #e3eceb 85%, #dfe5e5);
  white-space: nowrap;
}
.group {
  flex: none;
  display: flex;
  flex-direction: column;
  border: 1px solid #9a9da1;
  border-radius: 3px;
  box-shadow: 1px 1px 0 #f3f5f6;
  overflow: hidden;
}
.group-body {
  height: 66px;
  display: flex;
  justify-content: space-around;
  background: linear-gradient(#cdd1d8, #bfc4cd 19%, #b2b8c3 20%, #e3eceb);
}
.group footer {
  height: 16px;
  line-height: 15px;
  position: relative;
  text-align: center;
  padding-right: 18px;
  color: #fff;
  background: linear-gradient(#b2b4b5, #8e8f90);
}
.styles footer,
.cells footer,
.editing footer {
  padding-right: 0;
}
.launcher {
  position: absolute;
  right: 5px;
  top: 4px;
  width: 8px;
  height: 8px;
  border: 1px solid #e8e8e8;
  border-width: 1px 0 0 1px;
  background: linear-gradient(#555, #555) 100% 100% / 4px 4px no-repeat, #a9aaab;
  box-shadow: 1px 1px 0 #6a6a6a;
}
.clipboard {
  width: 101px;
}
.clipboard .group-body {
  justify-content: flex-start;
  gap: 5px;
  padding-left: 13px;
}
.clipboard footer {
  padding-right: 16px;
}
.font {
  width: 196px;
}
.align {
  width: 355px;
}
.number {
  width: 136px;
}
.styles {
  width: 249px;
}
.cells {
  width: 91px;
}
.editing {
  width: 173px;
}
.big {
  display: flex;
  flex-direction: column;
  align-items: center;
  padding-top: 3px;
  line-height: 13px;
}
.big > span {
  padding-top: 3px;
}
.big > .arrow {
  margin-top: 4px;
}
span > .arrow,
.line > .arrow {
  margin-left: 5px;
  vertical-align: middle;
}
.big span > .arrow {
  margin-left: 3px;
}
.stack {
  display: flex;
  flex-direction: column;
  justify-content: flex-start;
  gap: 6px;
  padding-top: 3px;
}
.stack button {
  display: flex;
  align-items: center;
  height: 16px;
}
.stack button .arrow {
  margin-left: 6px;
}
.sigma b {
  width: 14px;
  color: #000;
  font-family: "Liberation Serif", serif;
  font-size: 16px;
}
.line {
  display: flex;
  align-items: center;
  height: 22px;
}
.line svg {
  margin-right: 3px;
}
.cells .stack {
  padding-left: 6px;
}
.rows {
  display: flex;
  flex-direction: column;
  justify-content: flex-start;
  gap: 7px;
  padding: 8px 3px 0;
}
.row {
  display: flex;
  justify-content: space-between;
  gap: 3px;
}
.align .group-body {
  justify-content: flex-start;
}
.align .row {
  justify-content: flex-start;
}
.divider {
  width: 2px;
  margin: 5px 3px 6px 0;
  border-left: 1px solid #94989f;
  border-right: 1px solid #eef1f3;
}
.buttons {
  display: flex;
  height: 22px;
  border: 1px solid #9faab0;
  border-radius: 3px;
  background: linear-gradient(#d9dde0, #c9ced3 45%, #dde5e6);
}
.buttons button {
  display: flex;
  align-items: center;
  justify-content: center;
  gap: 4px;
  width: 22px;
  color: #222;
}
.buttons button + button {
  border-left: 1px solid #bcc4c9;
}
.buttons .wide {
  width: 32px;
}
.buttons .pressed {
  background: linear-gradient(#f6b969, #fb9f3c 45%, #ffe08a);
}
.serif {
  font-family: "Liberation Serif", serif;
  font-size: 14px;
  font-weight: bold;
}
.serif.grow {
  font-size: 16px;
  gap: 0;
}
.serif.shrink {
  font-size: 13px;
  gap: 0;
}
.grow .up,
.shrink .down {
  margin-bottom: 11px;
  border-bottom-color: #335a9c;
}
.shrink .down {
  border-bottom: 0;
  border-top-color: #335a9c;
}
.italic {
  font-style: italic;
}
.color b {
  width: 16px;
  height: 16px;
  line-height: 12px;
  border-bottom: 3px solid #f00;
  color: #2c4b8c;
  font-family: "Liberation Serif", serif;
  font-size: 15px;
}
.buttons .percent {
  font-size: 12px;
}
.buttons .thousands {
  font-family: "Liberation Sans", sans-serif;
  font-size: 10px;
}
.combos {
  display: flex;
}
.combo {
  position: relative;
  height: 22px;
  border: 1px solid #888;
  background: #e8e8e8;
}
.combo::after {
  content: "";
  position: absolute;
  right: 4px;
  top: 9px;
  border: 3px solid transparent;
  border-top-color: #777;
  border-bottom: 0;
}
.combo select {
  appearance: none;
  width: 100%;
  height: 20px;
  padding-left: 3px;
  color: #000;
}
.family {
  width: 98px;
}
.size {
  width: 43px;
  border-left: 0;
}

/* formula bar */
.formula {
  flex: none;
  display: flex;
  height: 28px;
  padding-top: 3px;
  border-bottom: 3px solid #e2e3e4;
  background: #5c5c5c;
  color: #000;
}
.name-box {
  display: flex;
  align-items: center;
  width: 158px;
  padding-right: 5px;
  background: #fff;
  border-bottom: 1px solid #5c5c5c;
}
.name-box input {
  width: 141px;
  text-align: center;
  font-size: 12px;
}
.name-box .arrow {
  margin-left: auto;
}
.fx {
  display: flex;
  align-items: center;
  justify-content: space-between;
  width: 86px;
  padding: 0 5px;
  margin-bottom: 1px;
  border-right: 1px solid #777;
  background: linear-gradient(#e6e6e6, #bcbcbc);
  border-radius: 10px 0 0 10px;
}
.dot {
  width: 9px;
  height: 9px;
  border-radius: 50%;
  background: #b5b9c0;
}
.fx i {
  font-family: "Liberation Serif", serif;
  font-size: 15px;
  color: #444;
}
.fx small {
  font-size: 11px;
}
.formula-text {
  flex: 1;
  background: #fff;
  border-bottom: 1px solid #5c5c5c;
}
.expand {
  display: flex;
  align-items: center;
  justify-content: center;
  width: 16px;
  border: 1px solid #555;
  background: linear-gradient(#fff, #ccc);
}

main {
  flex: 1;
  min-height: 0;
  display: flex;
  border-top: 1px solid #83878a;
}

/* recovery pane */
.recovery {
  flex: none;
  width: 244px;
  display: flex;
  flex-direction: column;
  border: 1px solid #45474a;
  border-top-width: 2px;
  border-right-width: 2px;
  background: #e9e9eb;
}
.recovery h2 {
  margin: 0;
  height: 18px;
  line-height: 19px;
  padding-left: 3px;
  background: #9b9e9c;
  font-size: 11px;
  font-weight: normal;
  color: #3b3b3b;
}
.recovery p {
  margin: 8px 30px 0 6px;
  line-height: 13px;
  color: #3c4450;
}
.recovery h3 {
  margin: 15px 7px 0;
  font-size: 11px;
  line-height: 14px;
  border-bottom: 1px solid #444;
  color: #444;
}
.files {
  flex: 1;
  display: flex;
  margin: 7px 7px 0 16px;
  border: 1px solid #828790;
  background: #fff;
  color: #000;
}
.files ul {
  flex: 1;
  margin: 0;
  padding: 4px 6px;
  list-style: none;
}
.files li {
  display: flex;
  gap: 9px;
  height: 62px;
  padding-left: 5px;
  border-bottom: 1px solid #000;
  white-space: nowrap;
}
.files li span {
  display: block;
  line-height: 15px;
}
.files-scroll {
  display: flex;
  flex-direction: column;
  align-items: center;
  justify-content: space-between;
  width: 17px;
  padding: 8px 0;
  background: #f0f0f1;
}
.help {
  display: flex;
  align-items: center;
  gap: 6px;
  margin: 40px 8px 0;
  color: #00f;
  text-decoration: none;
}
.close-pane {
  align-self: flex-end;
  width: 60px;
  height: 21px;
  margin: 9px 7px 8px;
  border: 1px solid #707070;
  border-radius: 3px;
  background: linear-gradient(#f3f3f3, #ebebeb 50%, #dcdcdc 50%, #cfcfcf);
  color: #000;
}

/* sheet */
.book {
  flex: 1;
  min-width: 0;
  display: flex;
  flex-direction: column;
}
.view {
  flex: 1;
  min-height: 0;
  display: flex;
}
.sheet {
  flex: 1;
  min-width: 0;
  overflow: hidden;
  background: #fff;
}
table {
  width: 100%;
  table-layout: fixed;
  border-collapse: separate;
  border-spacing: 0;
  font-family: Lato, sans-serif;
  font-size: 13px;
  line-height: 17px;
  color: #000;
}
.c-head {
  width: 26px;
}
.c-std {
  width: 64px;
}
.c-name {
  width: 155px;
}
.c-price {
  width: 134px;
}
th,
td {
  height: 20px;
  padding: 0;
  vertical-align: bottom;
  border-right: 1px solid #d0d7e5;
  border-bottom: 1px solid #d0d7e5;
}
th {
  font-family: "Open Sans", sans-serif;
  font-size: 12px;
  font-weight: normal;
  color: #333;
  background: #ececec;
  border-color: #b6b6b6;
}
thead th {
  background: linear-gradient(#f6f6f6, #dcdcdc);
}
th.current {
  background: #fbd08b;
  border-color: #c79a55;
}
thead th.current {
  background: linear-gradient(#f8c877, #eeb457);
}
thead .corner {
  background: linear-gradient(135deg, transparent 50%, #6f6f6f 50%) 10px 5px / 11px 11px no-repeat, #c4c4c4;
}
.promo td {
  height: 80px;
}
.promo td[colspan] {
  padding: 0 4px;
  vertical-align: top;
  text-align: center;
  font-size: 25px;
  line-height: 35px;
  background: #ff0;
  border-color: #ff0;
}
.season td {
  height: 28px;
  padding: 0 3px;
  font-size: 19px;
  line-height: 25px;
  font-weight: bold;
}
.season td:nth-child(3),
.season td:nth-child(4),
.price td:nth-child(3),
.price td:nth-child(4) {
  border-bottom-color: #000;
}
.price td:nth-child(2),
.price td:nth-child(3),
.price td:nth-child(4) {
  border-right-color: #000;
}
.price td:nth-child(3) {
  padding-left: 2px;
  font-size: 14px;
  font-weight: bold;
}
.price td:nth-child(4) {
  padding-right: 12px;
  text-align: center;
}
td.selected {
  position: relative;
}
td.selected::before {
  content: "";
  position: absolute;
  inset: -2px;
  border: 2px solid #000;
}
td.selected::after {
  content: "";
  position: absolute;
  right: -3px;
  bottom: -3px;
  width: 6px;
  height: 6px;
  background: #000;
  border: 1px solid #fff;
  border-width: 1px 0 0 1px;
}

/* scrollbars */
.vscroll {
  flex: none;
  width: 16px;
  display: flex;
  flex-direction: column;
  align-items: center;
  padding-bottom: 6px;
  border-left: 1px solid #666;
  background: #404040;
}
.vscroll .split {
  width: 15px;
  height: 8px;
  border: 2px solid #ddd;
  background: linear-gradient(#888 50%, #fff 50%);
}
.vscroll .up {
  margin: 6px 0 7px;
  border-width: 0 5px 5px;
  border-bottom-color: #aaa;
}
.vscroll .down {
  margin-top: auto;
  border-width: 5px 5px 0;
  border-top-color: #aaa;
}
.vscroll .thumb {
  flex: 0 1 432px;
  width: 13px;
  border-radius: 1px;
  background:
    repeating-linear-gradient(#777 0 1px, transparent 1px 2px) center / 8px 8px no-repeat,
    linear-gradient(90deg, #fbfbfb, #d8d9da 50%, #bfc1c3);
}
.sheet-bar {
  flex: none;
  height: 16px;
  display: flex;
  padding-right: 16px;
  background: linear-gradient(#666, #7d7d7d);
  border-top: 1px solid #666;
}
.sheet-nav {
  flex: none;
  display: flex;
  align-items: center;
  justify-content: space-around;
  width: 62px;
  background: linear-gradient(#dfe1e4, #c3c8ce);
}
.sheet-tab {
  flex: none;
  padding: 0 11px;
  margin: 0 0 1px 1px;
  line-height: 13px;
  background: linear-gradient(#dcdfe3, #bfc4cb);
  border-radius: 0 0 4px 4px;
  font-size: 12px;
}
.sheet-tab.active {
  padding: 0 6px;
  background: #fff;
  font-size: 11px;
  font-weight: bold;
  color: #222;
}
.sheet-new {
  flex: none;
  width: 44px;
  margin-bottom: 1px;
  display: flex;
  justify-content: center;
  background: #c8cdd5;
  clip-path: polygon(25% 0, 100% 0, 75% 100%, 0 100%);
}
.hscroll {
  margin-left: auto;
  width: 442px;
  display: flex;
  align-items: center;
  background: #404040;
}
.hscroll i {
  border-top-width: 4px;
  border-bottom-width: 4px;
}
.hscroll .handle {
  width: 7px;
  height: 14px;
  border: 2px solid #fff;
  border-right-width: 3px;
  background: #777;
}
.hscroll .left {
  margin: 0 9px 0 5px;
}
.hscroll .thumb {
  width: 335px;
  height: 13px;
  background:
    repeating-linear-gradient(90deg, #888 0 1px, transparent 1px 2px) center / 8px 7px no-repeat,
    linear-gradient(#fff, #ddd);
}
.hscroll .right {
  margin: 0 9px 0 auto;
}

/* status bar */
.status {
  flex: none;
  display: flex;
  justify-content: space-between;
  height: 23px;
  background: linear-gradient(#434652, #3d404a 36%, #2e2e2e 38%, #464646);
  color: #fff;
}
.ready {
  width: 56px;
  margin: 3px 0;
  padding-left: 7px;
  line-height: 17px;
  border-right: 1px solid #111;
}
.zoom {
  display: flex;
  align-items: center;
  gap: 5px;
  padding: 0 6px 0 4px;
  border-left: 2px solid #222;
  background: linear-gradient(#8c9096, #7b7e83 45%, #5a5b5d 50%, #77787a);
}
.views {
  display: flex;
  margin-right: 3px;
  border: 1px solid #bbb;
  border-radius: 2px;
}
.views button {
  width: 18px;
  height: 16px;
  display: flex;
  align-items: center;
  justify-content: center;
  background: #a9aaac;
}
.views .on {
  background: #fbd58b;
}
.round {
  width: 15px;
  height: 15px;
  display: flex;
  align-items: center;
  justify-content: center;
  border-radius: 50%;
  border: 1px solid #555;
  background: #d2d3d4;
}
.zoom span {
  padding-right: 4px;
}
input[type="range"] {
  appearance: none;
  width: 96px;
  height: 14px;
  background: linear-gradient(#ddd, #ddd) center / 100% 1px no-repeat;
}
input[type="range"]::-webkit-slider-thumb {
  appearance: none;
  width: 8px;
  height: 12px;
  border: 1px solid #eee;
  border-radius: 1px 1px 4px 4px;
  background: #777;
}

/* taskbar */
.taskbar {
  flex: none;
  display: flex;
  align-items: center;
  height: 40px;
  padding-bottom: 1px;
  background: #070b10;
  border-top: 1px solid #5a6468;
  color: #fff;
}
.start {
  margin-left: 8px;
}
.grip {
  width: 8px;
  height: 30px;
  margin: 0 10px 0 12px;
  background: radial-gradient(circle, #777 30%, transparent 35%) 0 0 / 3px 4px;
}
.apps {
  display: flex;
  gap: 4px;
}
.apps button {
  display: flex;
  align-items: center;
  justify-content: center;
  width: 58px;
  height: 38px;
}
.apps .running {
  border: 1px solid #8b9094;
  border-radius: 2px;
  background: linear-gradient(160deg, #83878b, #33383d 45%, #181c20 50%, #2b3035);
}
.apps .current {
  width: 53px;
  margin-right: 5px;
  background: linear-gradient(160deg, #dfe1e2, #93979a 45%, #6d7174 50%, #8b9093);
  box-shadow: 5px 0 0 -1px #6d7174;
}
.apps .opera {
  border: 1px solid #e99;
  border-radius: 2px;
  background: linear-gradient(160deg, #dc8c8c, #bd3436 45%, #d3272a);
}
.apps .running:last-child {
  width: 51px;
  box-shadow: 4px 0 0 -1px #3c4145, 8px 0 0 -2px #2c3135;
}
.apps + .grip {
  margin-left: auto;
}
.lang {
  margin-right: 14px;
}
.tray {
  display: flex;
  gap: 8px;
  margin-right: 17px;
}
.clock {
  display: flex;
  flex-direction: column;
  align-items: center;
  line-height: 17px;
  margin-right: 11px;
}
.desktop {
  width: 14px;
  height: 38px;
  border: 1px solid #555;
  background: linear-gradient(#667, #1a1d20 50%, #111);
}
```
FILE: script.js
```
const body = document.querySelector("#sheet tbody");
const columns = 16;
const lastRow = 22;

// empty rows under the price list
for (let i = body.rows.length + 1; i <= lastRow; i++) {
  const row = body.insertRow();
  const head = document.createElement("th");
  head.textContent = i;
  row.appendChild(head);
}

// fill every row up to the last column
for (const row of body.rows) {
  let count = 0;
  for (const cell of row.cells) {
    count += cell.colSpan;
  }
  while (count < columns) {
    row.insertCell();
    count++;
  }
}

// R11C8
body.rows[10].cells[8].className = "selected";
```
